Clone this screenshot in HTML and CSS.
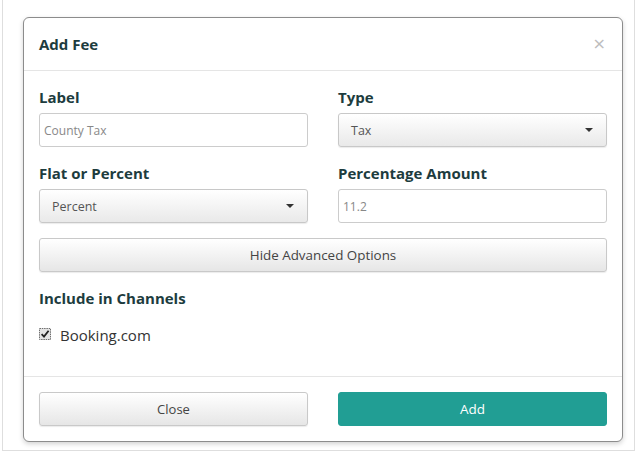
FILE: index.html
```html
<!DOCTYPE html>
<html>
<head>
<meta charset="utf-8">
<link rel="stylesheet" href="styles.css">
</head>
<body>
<div class="frame">
  <div class="modal">
    <div class="modal-header">
      <h4 class="title">Add Fee</h4>
      <span class="close">&times;</span>
    </div>
    <div class="modal-body">
      <div class="row row-first">
        <div class="group">
          <label class="lbl">Label</label>
          <div class="input placeholder">County Tax</div>
        </div>
        <div class="group">
          <label class="lbl">Type</label>
          <div class="select"><span>Tax</span><span class="caret"></span></div>
        </div>
      </div>
      <div class="row">
        <div class="group">
          <label class="lbl">Flat or Percent</label>
          <div class="select"><span>Percent</span><span class="caret"></span></div>
        </div>
        <div class="group">
          <label class="lbl">Percentage Amount</label>
          <div class="input">11.2</div>
        </div>
      </div>
      <div class="btn btn-default wide">Hide Advanced Options</div>
      <label class="lbl section">Include in Channels</label>
      <div class="check-row">
        <svg class="cb" width="12" height="12" viewBox="0 0 12 12">
          <rect x="0.5" y="0.5" width="11" height="11" fill="#e4e4e4" stroke="#6f6f6f" stroke-dasharray="1.5 0.8"/>
          <path d="M2.6 6.2 L5 8.6 L9.6 2.8" fill="none" stroke="#222" stroke-width="1.8"/>
        </svg>
        <span class="check-text">Booking.com</span>
      </div>
    </div>
    <div class="modal-footer">
      <div class="btn btn-default">Close</div>
      <div class="btn btn-primary">Add</div>
    </div>
  </div>
</div>
</body>
</html>
```
FILE: styles.css
```css
html, body {
  margin: 0;
  padding: 0;
  background: #fff;
}
body {
  font-family: "Open Sans", "Noto Sans", sans-serif;
  width: 638px;
  height: 456px;
  overflow: hidden;
}
.frame {
  margin: 0 3px 0 2px;
  height: 451px;
  border: 1px solid #dedede;
  border-top: none;
  box-sizing: border-box;
  padding-top: 17px;
  padding-left: 20px;
}
.modal {
  width: 600px;
  height: 425px;
  box-sizing: border-box;
  border: 1px solid #8c8c8c;
  border-radius: 6px;
  background: #fff;
  box-shadow: 0 2px 5px rgba(0,0,0,0.18);
  display: flex;
  flex-direction: column;
}
.modal-header {
  height: 53px;
  box-sizing: border-box;
  border-bottom: 1px solid #e5e5e5;
  padding: 0 15px;
  display: flex;
  align-items: center;
  justify-content: space-between;
}
.title {
  margin: 0;
  font-size: 15px;
  font-weight: 700;
  color: #1d3c3e;
  line-height: 20px;
}
.close {
  font-family: "DejaVu Sans", sans-serif;
  font-size: 16px;
  color: #bdbdbd;
  line-height: 20px;
  margin-right: 1px;
}
.modal-body {
  padding: 16px 15px 0 15px;
  flex: 1;
}
.row {
  display: flex;
  gap: 30px;
  margin-bottom: 15px;
}
.row-first {
  margin-bottom: 16px;
}
.group {
  width: 269px;
}
.lbl {
  display: block;
  font-size: 15px;
  font-weight: 700;
  color: #1d3c3e;
  line-height: 20px;
  margin-bottom: 6px;
}
.input {
  height: 34px;
  box-sizing: border-box;
  border: 1px solid #ccc;
  border-radius: 3px;
  padding: 0 4px;
  font-size: 12px;
  color: #888;
  display: flex;
  align-items: center;
  background: #fff;
}
.select {
  height: 34px;
  box-sizing: border-box;
  border: 1px solid #c8c8c8;
  border-radius: 3px;
  padding: 0 12px 0 12px;
  font-size: 12.5px;
  color: #555;
  display: flex;
  align-items: center;
  justify-content: space-between;
  background: linear-gradient(#ffffff, #e9e9e9);
  box-shadow: 0 1px 1px rgba(0,0,0,0.08);
}
.caret {
  width: 0;
  height: 0;
  border-left: 4px solid transparent;
  border-right: 4px solid transparent;
  border-top: 4px solid #333;
  margin-right: 1px;
}
.btn {
  height: 34px;
  box-sizing: border-box;
  border-radius: 3px;
  display: flex;
  align-items: center;
  justify-content: center;
  font-size: 13px;
  width: 269px;
}
.btn-default {
  border: 1px solid #c9c9c9;
  background: linear-gradient(#ffffff, #e6e6e6);
  color: #444;
  box-shadow: 0 1px 1px rgba(0,0,0,0.08);
}
.btn-primary {
  background: #219e94;
  border: 1px solid #219e94;
  color: #fff;
  font-size: 13.5px;
}
.wide {
  width: 100%;
  margin-bottom: 16px;
  font-size: 13.4px;
}
.section {
  margin-bottom: 0;
}
.check-row {
  display: flex;
  align-items: center;
  height: 34px;
  margin-top: 10px;
}
.cb {
  margin-right: 9px;
  margin-bottom: 2px;
}
.check-text {
  font-size: 15px;
  color: #333;
}
.modal-footer {
  border-top: 1px solid #e5e5e5;
  padding: 15px;
  display: flex;
  gap: 30px;
}
```
